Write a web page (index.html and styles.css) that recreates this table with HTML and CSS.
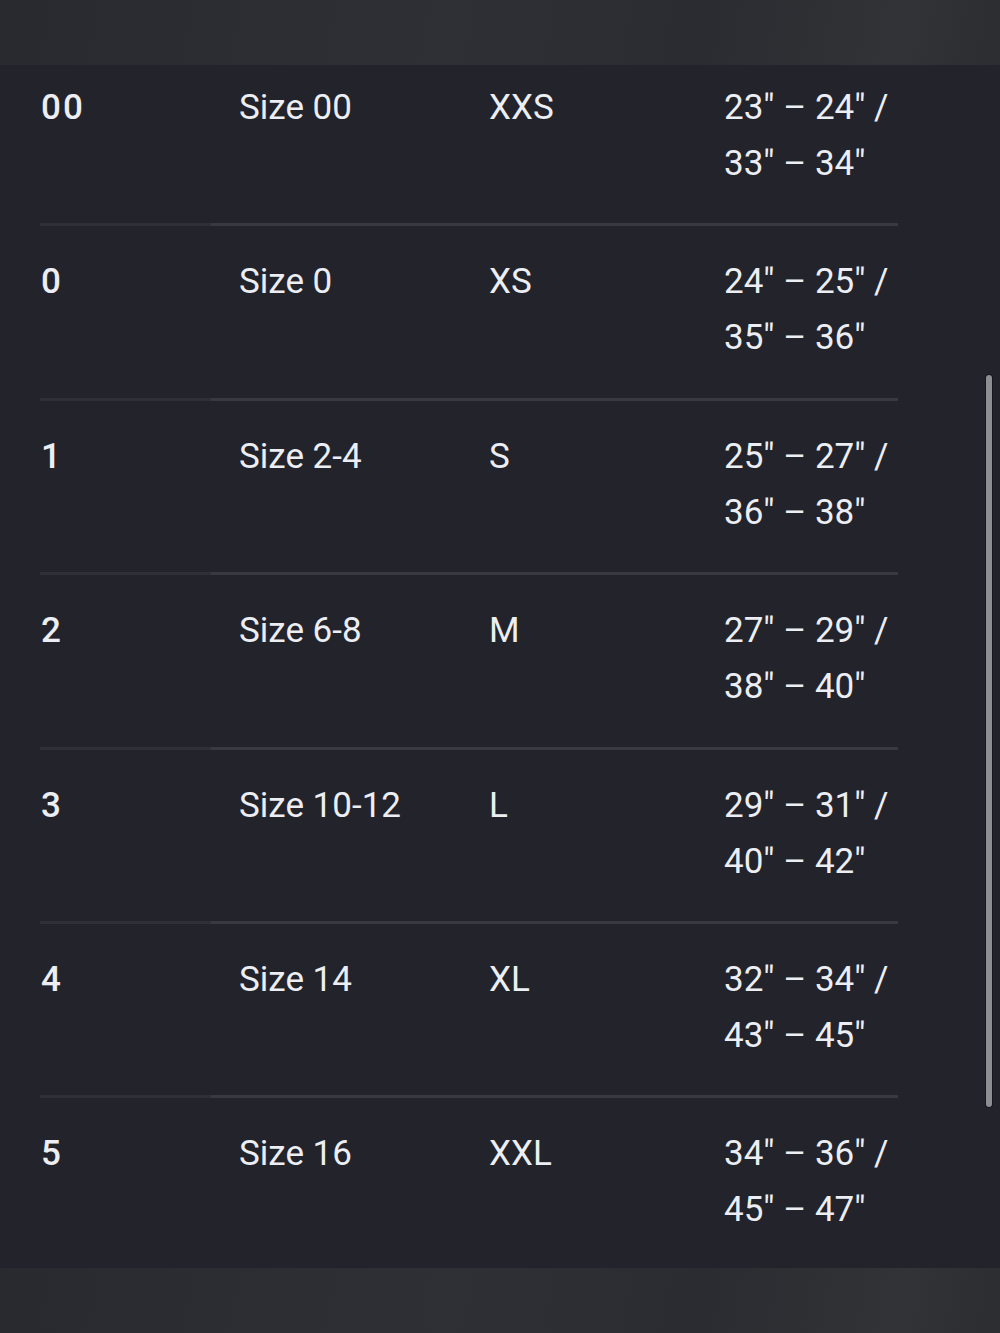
FILE: index.html
```html
<!DOCTYPE html>
<html lang="en">
<head>
    <meta charset="UTF-8">
    <meta name="viewport" content="width=device-width, initial-scale=1.0">
    <title>Size Chart</title>
    <link rel="stylesheet" href="styles.css">
</head>
<body>
    <div class="topbar"></div>

    <div class="viewport">
        <div class="chart">
            <div class="row">
                <div class="cell code">00</div>
                <div class="cell">Size 00</div>
                <div class="cell">XXS</div>
                <div class="cell measure">23" – 24" /<br>33" – 34"</div>
            </div>
            <div class="row">
                <div class="cell code">0</div>
                <div class="cell">Size 0</div>
                <div class="cell">XS</div>
                <div class="cell measure">24" – 25" /<br>35" – 36"</div>
            </div>
            <div class="row">
                <div class="cell code">1</div>
                <div class="cell">Size 2-4</div>
                <div class="cell">S</div>
                <div class="cell measure">25" – 27" /<br>36" – 38"</div>
            </div>
            <div class="row">
                <div class="cell code">2</div>
                <div class="cell">Size 6-8</div>
                <div class="cell">M</div>
                <div class="cell measure">27" – 29" /<br>38" – 40"</div>
            </div>
            <div class="row">
                <div class="cell code">3</div>
                <div class="cell">Size 10-12</div>
                <div class="cell">L</div>
                <div class="cell measure">29" – 31" /<br>40" – 42"</div>
            </div>
            <div class="row">
                <div class="cell code">4</div>
                <div class="cell">Size 14</div>
                <div class="cell">XL</div>
                <div class="cell measure">32" – 34" /<br>43" – 45"</div>
            </div>
            <div class="row last">
                <div class="cell code">5</div>
                <div class="cell">Size 16</div>
                <div class="cell">XXL</div>
                <div class="cell measure">34" – 36" /<br>45" – 47"</div>
            </div>
        </div>

        <!-- scroll thumb sits over the list -->
        <div class="scrollthumb"></div>
    </div>

    <div class="bottombar"></div>
</body>
</html>
```

FILE: styles.css
```css
html, body {
    margin: 0;
    padding: 0;
}

body {
    width: 1000px;
    height: 1333px;
    background: #22232b;
    color: #eceef3;
    font-family: Roboto, 'Noto Sans', sans-serif;
    display: flex;
    flex-direction: column;
    overflow: hidden;
}

.topbar,
.bottombar {
    flex: none;
    background: linear-gradient(100deg, #292a2f 0%, #2f3035 45%, #2b2c31 70%, #323337 90%, #2c2d31 100%);
}

.topbar {
    height: 65px;
}

.bottombar {
    height: 65px;
}

.viewport {
    position: relative;
    flex: 1;
    overflow: hidden;
}

.chart {
    margin-top: -13px;
    padding-left: 40px;
    width: 858px;
}

.row {
    display: grid;
    grid-template-columns: 198px 250px 235px 1fr;
    padding: 28px 0 31.4px 1px;
    font-size: 35px;
    line-height: 56px;
    border-bottom: 3px solid transparent;
    border-image: linear-gradient(to right, #2f3037 0, #2f3037 172px, #393a41 172px, #393a41 100%) 1;
}

.row.last {
    border-bottom: none;
}

.cell {
    white-space: nowrap;
}

.code {
    font-weight: 500;
    letter-spacing: 2px;
}

.scrollthumb {
    position: absolute;
    right: 8px;
    top: 310px;
    width: 6px;
    height: 732px;
    border-radius: 4px;
    background: #8d8e93;
    box-shadow: 0 0 0 1px #17181d;
}
```
